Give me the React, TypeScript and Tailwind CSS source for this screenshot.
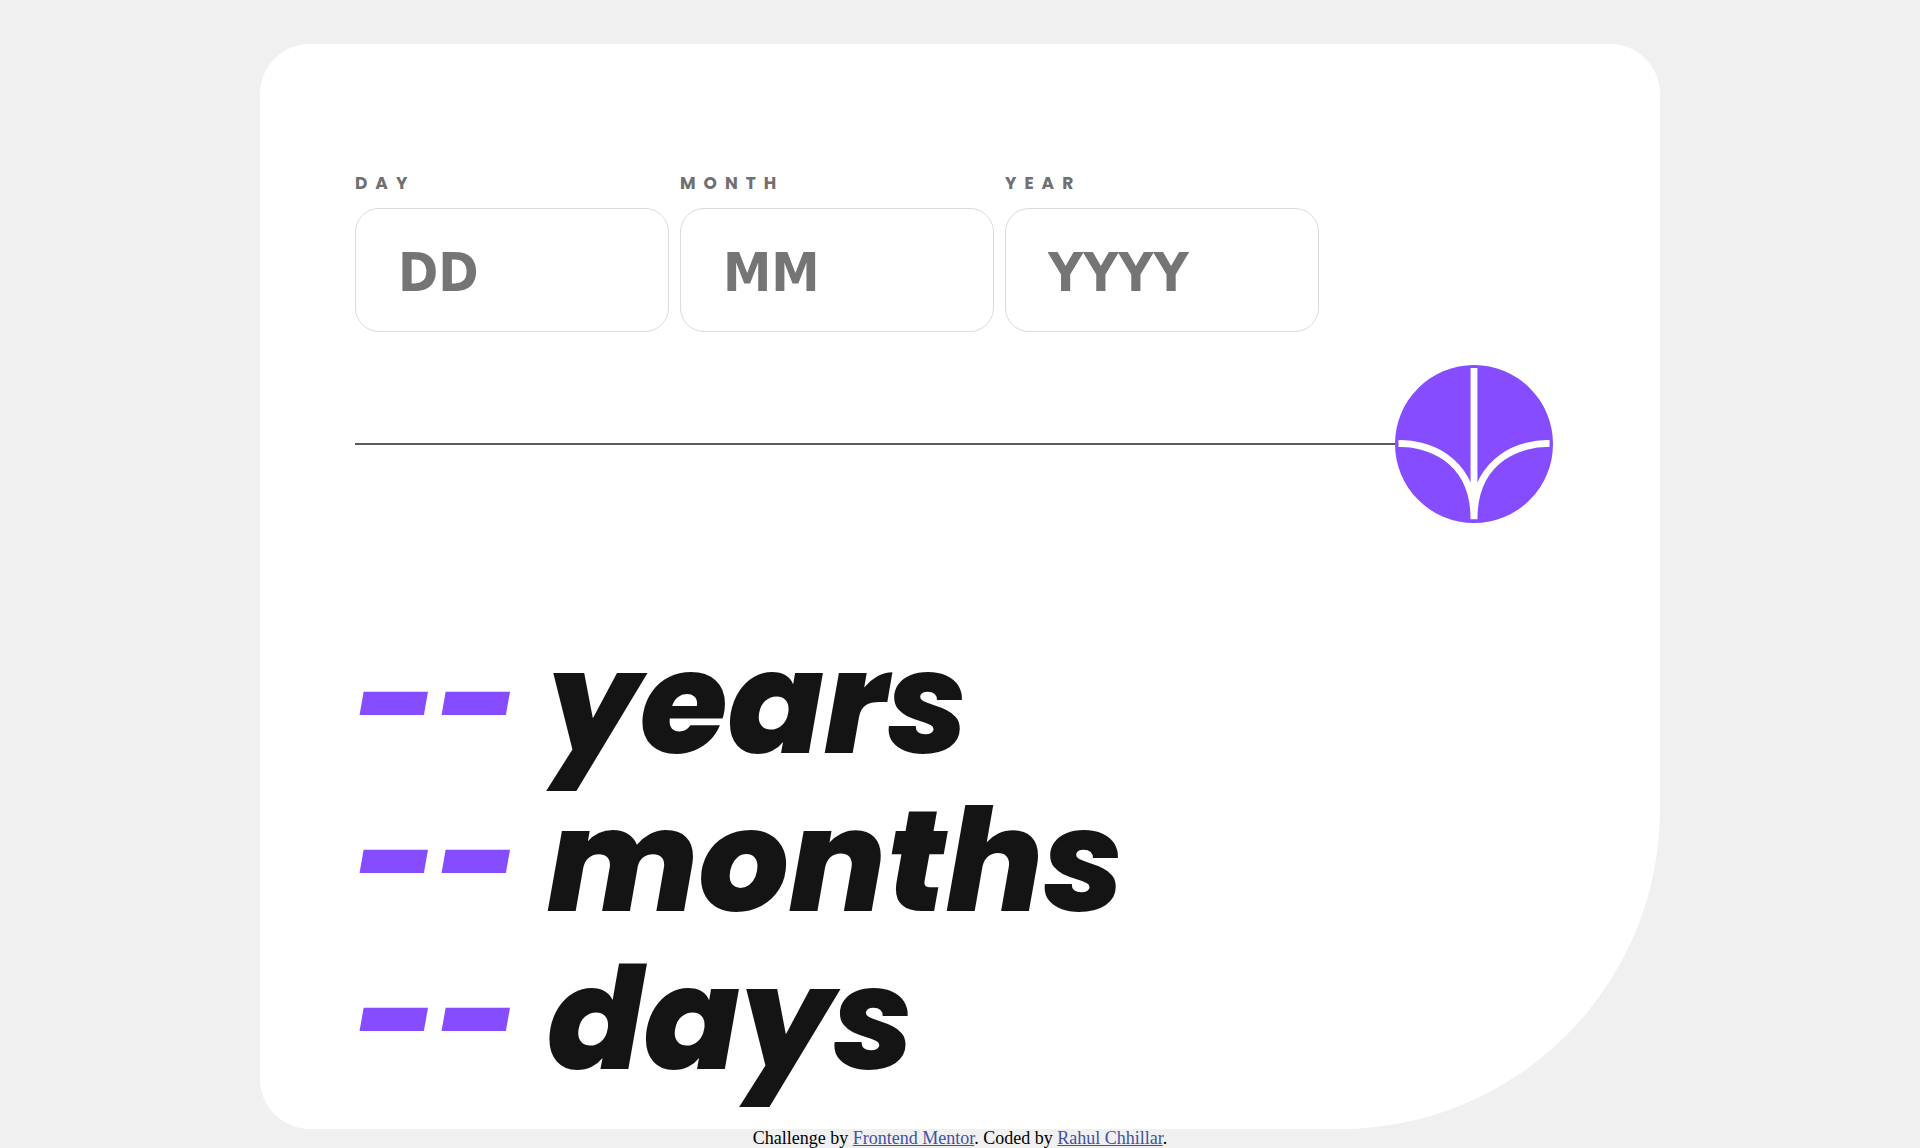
import React from "react";

const fields = [
  { id: "day", label: "DAY", placeholder: "DD" },
  { id: "month", label: "MONTH", placeholder: "MM" },
  { id: "year", label: "YEAR", placeholder: "YYYY" },
];

const units = ["years", "months", "days"];

function Field({ id, label, placeholder }: { id: string; label: string; placeholder: string }) {
  return (
    <div className="flex min-w-0 max-w-[314px] flex-1 flex-col gap-3.5">
      <label
        htmlFor={id}
        className="font-['Poppins','Inter',sans-serif] text-[17px] leading-[22px] font-bold tracking-[8px] text-[#716f6f]"
      >
        {label}
      </label>
      <input
        id={id}
        type="text"
        inputMode="numeric"
        placeholder={placeholder}
        className="h-[124px] w-full rounded-3xl border border-[#dbdbdb] bg-white px-[42px] pt-1 font-['DejaVu_Sans_Condensed','Open_Sans',sans-serif] text-[54px] font-bold text-[#141414] outline-none placeholder:text-[#757575] focus:border-[#854dff]"
      />
    </div>
  );
}

function ArrowIcon() {
  return (
    <svg viewBox="0 0 46 44" fill="none" stroke="#fff" strokeWidth="2" className="w-full" aria-hidden="true">
      <path d="M1 22.019C8.333 21.686 23 25.616 23 44M23 44V0M45 22.019C37.667 21.686 23 25.616 23 44" />
    </svg>
  );
}

export default function App() {
  return (
    <div className="min-h-screen bg-[#f0f0f0] pt-11">
      <main className="mx-auto w-full max-w-[1400px] rounded-[50px] rounded-br-[320px] bg-white px-[95px] pt-32 pb-[30px]">
        <form onSubmit={(e) => e.preventDefault()}>
          <div className="flex gap-[11px]">
            {fields.map((f) => (
              <Field key={f.id} {...f} />
            ))}
          </div>
          <div className="mt-[33px] mr-3 flex items-center">
            <div className="h-0.5 flex-1 bg-[#5c5c5c]" />
            <button
              type="submit"
              aria-label="Calculate age"
              className="flex size-[158px] items-center justify-center rounded-full bg-[#854dff]"
            >
              <ArrowIcon />
            </button>
          </div>
        </form>
        <div className="mt-[102px] font-['Poppins','Inter',sans-serif] text-[142px] leading-[158px] font-extrabold text-[#141414] italic">
          {units.map((u) => (
            <p key={u} className="flex">
              <span className="w-[192px] text-[#854dff]">--</span>
              <span>{u}</span>
            </p>
          ))}
        </div>
      </main>
      <footer className="text-center font-['Liberation_Serif',serif] text-lg leading-[18px] text-black">
        Challenge by{" "}
        <a href="#frontend-mentor" className="text-[#3e52a3] underline">
          Frontend Mentor
        </a>
        . Coded by{" "}
        <a href="#author" className="text-[#3e52a3] underline">
          Rahul Chhillar
        </a>
        .
      </footer>
    </div>
  );
}
